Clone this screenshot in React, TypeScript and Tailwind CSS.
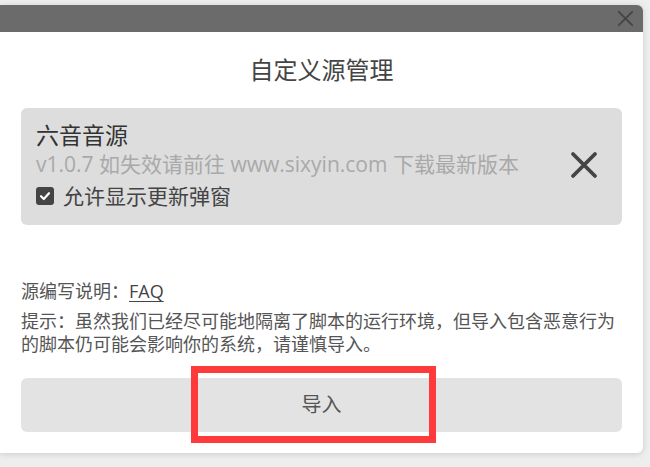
import { useState } from "react";

function CloseIcon({ size, stroke }: { size: number; stroke: number }) {
  return (
    <svg width={size} height={size} viewBox="0 0 28 28" fill="none">
      <path
        d="M3 3L25 25M25 3L3 25"
        stroke="currentColor"
        strokeWidth={stroke}
        strokeLinecap="round"
      />
    </svg>
  );
}

export default function App() {
  const [allowUpdate, setAllowUpdate] = useState(true);

  return (
    <div
      className="relative w-[650px] h-[467px] overflow-hidden bg-[#eeeeee] pt-[5px] text-[#444]"
      style={{ fontFamily: '"Open Sans", "Noto Sans CJK SC", sans-serif' }}
    >
      <div className="w-[643px] h-[448px] bg-white rounded-r-[6px] shadow-[0_1px_6px_rgba(0,0,0,0.15)] flex flex-col overflow-hidden">
        <div className="h-[27px] bg-[#6b6b6b] flex items-center justify-end pr-[9px]">
          <span className="text-[#454545]">
            <CloseIcon size={17} stroke={3.2} />
          </span>
        </div>

        <div className="flex flex-col px-[21px]">
          <h1 className="pt-[24px] h-[52px] leading-[28px] text-center text-[24px] font-normal text-[#444]">
            自定义源管理
          </h1>

          <div className="mt-[24px] h-[117px] rounded-[6px] bg-[#dddddd] pl-[15px] pr-[24px] pt-[12px] flex items-start justify-between">
            <div className="flex flex-col">
              <div className="h-[30px] leading-[30px] text-[23px] text-[#333]">六音音源</div>
              <div className="h-[28px] leading-[28px] text-[21px] text-[#a9a9a9]">
                v1.0.7 如失效请前往 www.sixyin.com 下载最新版本
              </div>
              <label className="mt-[3px] h-[30px] flex items-center gap-[9px] text-[21px] text-[#444] cursor-pointer">
                <input
                  type="checkbox"
                  className="sr-only"
                  checked={allowUpdate}
                  onChange={(e) => setAllowUpdate(e.target.checked)}
                />
                <span className="w-[18px] h-[18px] rounded-[3px] bg-[#444] flex items-center justify-center">
                  {allowUpdate && (
                    <svg width="12" height="12" viewBox="0 0 12 12" fill="none">
                      <path
                        d="M2 6.2L4.8 9L10 3.2"
                        stroke="white"
                        strokeWidth="2.2"
                        strokeLinecap="round"
                        strokeLinejoin="round"
                      />
                    </svg>
                  )}
                </span>
                <span className="leading-[30px]">允许显示更新弹窗</span>
              </label>
            </div>
            <button className="mt-[31px] text-[#444]">
              <CloseIcon size={28} stroke={3.8} />
            </button>
          </div>

          <div className="mt-[55px] h-[23px] leading-[23px] text-[18px] text-[#555]">
            源编写说明：<span className="underline underline-offset-[3px] text-[#444]">FAQ</span>
          </div>
          <p className="mt-[7px] leading-[23px] text-[18px] text-[#555]">
            提示：虽然我们已经尽可能地隔离了脚本的运行环境，但导入包含恶意行为的脚本仍可能会影响你的系统，请谨慎导入。
          </p>

          <button className="mt-[22px] h-[54px] w-full rounded-[6px] bg-[#e3e3e3] text-[20px] text-[#555]">
            导入
          </button>
        </div>
      </div>

      <div className="absolute left-[191px] top-[366px] w-[245px] h-[77px] border-[7px] border-[#ff3a3a] pointer-events-none" />
    </div>
  );
}
